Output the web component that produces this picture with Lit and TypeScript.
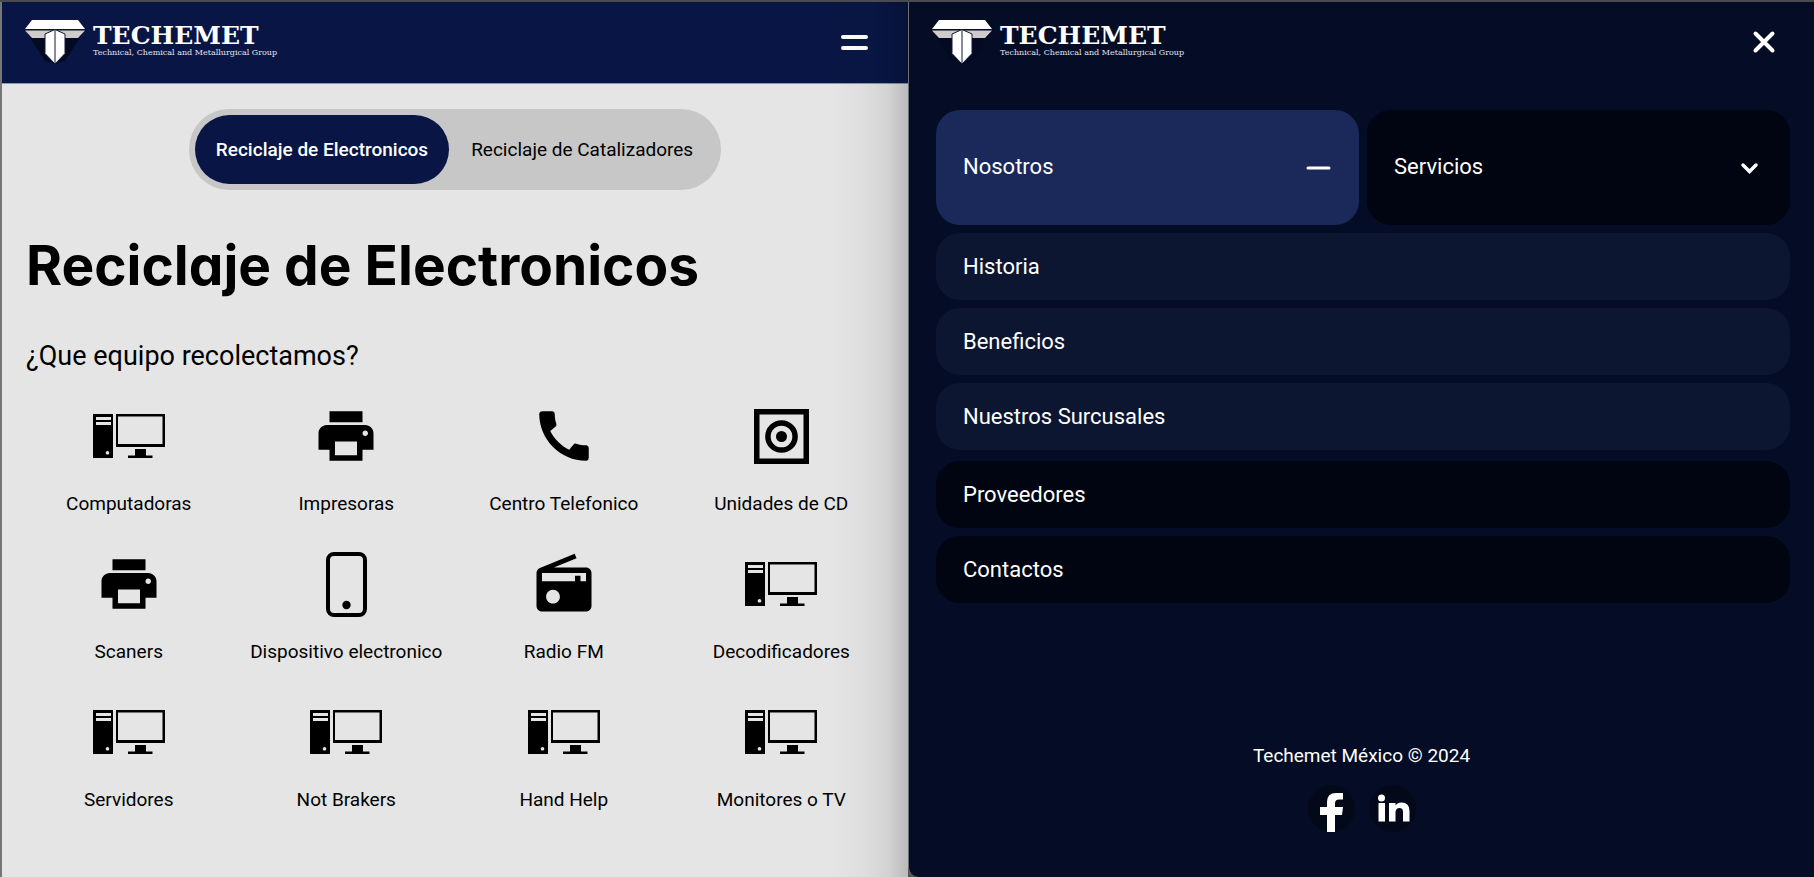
import { LitElement, html, css, svg } from "lit";
import { customElement, property, state } from "lit/decorators.js";

const pc = svg`<path fill-rule="evenodd" d="M0 0h20v44H0zM3 3v3h15V3zM3 8v3h15V8zM14.500 37a1.800 1.800 0 1 0 .01 0z"/><path fill-rule="evenodd" d="M23 0h49v33H23zM25 2.500v27.500h44.500V2.500z"/><path d="M42 35h11v6.500h6.500V44H35v-2.500h7z"/>`;
const icons: Record<string, { w: number; h: number; box: string; art: unknown }> = {
  pc: { w: 72, h: 44, box: "0 0 72 44", art: pc },
  printer: {
    w: 66, h: 66, box: "0 0 24 24",
    art: svg`<path d="M19 8H5c-1.660 0-3 1.340-3 3v6h4v4h12v-4h4v-6c0-1.660-1.340-3-3-3zm-3 11H8v-5h8v5zm3-7c-.550 0-1-.450-1-1s.450-1 1-1 1 .450 1 1-.450 1-1 1zm-1-9H6v4h12V3z"/>`,
  },
  phone: {
    w: 66, h: 66, box: "0 0 24 24",
    art: svg`<path d="M20.010 15.380c-1.230 0-2.420-.200-3.530-.560a.977.977 0 0 0-1.010.240l-1.570 1.970c-2.830-1.350-5.480-3.900-6.890-6.830l1.950-1.660c.270-.280.350-.670.240-1.020-.370-1.110-.560-2.300-.560-3.530 0-.540-.450-.990-.990-.990H4.190C3.650 3 3 3.240 3 3.990 3 13.280 10.730 21 20.010 21c.710 0 .990-.630.990-1.180v-3.450c0-.540-.450-.990-.990-.990z"/>`,
  },
  disc: {
    w: 55, h: 55, box: "0 0 55 55",
    art: svg`<path fill-rule="evenodd" d="M0 0h55v55H0zM5.500 5.500v44h44v-44z"/><circle cx="27.500" cy="27.500" r="13.600" fill="none" stroke="currentColor" stroke-width="5.500"/><circle cx="27.500" cy="27.500" r="5.500"/>`,
  },
  mobile: {
    w: 41, h: 65, box: "0 0 41 65",
    art: svg`<rect x="2" y="2" width="37" height="61" rx="6" fill="none" stroke="currentColor" stroke-width="4"/><circle cx="20.500" cy="53" r="4.200"/>`,
  },
  radio: {
    w: 66, h: 66, box: "0 0 24 24",
    art: svg`<path d="M3.240 6.150C2.510 6.430 2 7.170 2 8v12c0 1.100.890 2 2 2h16c1.110 0 2-.900 2-2V8c0-1.110-.890-2-2-2H8.300l8.260-3.340L15.880 1 3.240 6.150zM8 19.100c-1.400 0-2.500-1.100-2.500-2.500s1.100-2.500 2.500-2.500 2.500 1.100 2.500 2.500-1.100 2.500-2.500 2.500zM20 11H4V8h16z"/><path d="M16 9h2v3h-2z"/>`,
  },
};

@customElement("brand-logo")
export class BrandLogo extends LitElement {
  static styles = css`
    :host { display: block; }
    .brand { display: flex; align-items: center; gap: 8px; color: #fff; text-decoration: none; }
    .mark { display: block; flex: none; }
    .words { display: flex; flex-direction: column; }
    .name { font: 700 25px/22px "DejaVu Serif", serif; }
    .tag { font: 400 8px/12px "DejaVu Serif", serif; color: #e3e6f0; white-space: nowrap; }
  `;
  render() {
    return html`<a class="brand" href="#">
      <svg class="mark" width="60" height="44" viewBox="0 0 60 44" aria-hidden="true">
        <path d="M0 10 20 41 30 44 40 41 60 10z" fill="#030a22" />
        <path d="M7 0h46l7 9H0z" fill="#fff" />
        <path d="M0 10.500h60l-7 7.500H7z" fill="#cfcbcb" />
        <path d="M30 9.500 40 14v19.500L30 44 20 33.500V14z" fill="#fff" stroke="#10183a" />
        <path d="M30 10v33" stroke="#10183a" />
      </svg>
      <span class="words"><span class="name">TECHEMET</span><span class="tag">Technical, Chemical and Metallurgical Group</span></span>
    </a>`;
  }
}

@customElement("catalog-page")
export class CatalogPage extends LitElement {
  @property({ attribute: false }) items: [string, string][] = [
    ["pc", "Computadoras"], ["printer", "Impresoras"], ["phone", "Centro Telefonico"], ["disc", "Unidades de CD"],
    ["printer", "Scaners"], ["mobile", "Dispositivo electronico"], ["radio", "Radio FM"], ["pc", "Decodificadores"],
    ["pc", "Servidores"], ["pc", "Not Brakers"], ["pc", "Hand Help"], ["pc", "Monitores o TV"],
  ];
  @state() tab = 0;
  static styles = css`
    :host { display: flex; flex-direction: column; min-width: 0; position: relative; background: #e5e5e5; color: #000; border-left: 2px solid #777; }
    .shade { position: absolute; inset: 0 0 0 auto; width: 80px; pointer-events: none; background: linear-gradient(90deg, transparent, rgba(0,0,0,.03) 45%, rgba(0,0,0,.08) 75%, rgba(0,0,0,.19)); }
    .bar { box-sizing: border-box; display: flex; justify-content: space-between; align-items: center; height: 82px; padding: 0 38px 1px 23px; background: #091645; border-bottom: 1px solid #8f96b5; }
    button { font: inherit; color: inherit; border: 0; background: none; cursor: pointer; }
    .menu { display: grid; gap: 7px; padding: 2px; }
    .menu span { width: 27px; height: 4px; border-radius: 2px; background: #fff; }
    main { padding: 25px 24px 0; display: flex; flex-direction: column; }
    .tabs { align-self: center; display: flex; padding: 6px; border-radius: 40px; background: #c7c7c7; }
    .tab { height: 69px; padding: 0 21px; border-radius: 35px; font-size: 19px; }
    .tab + .tab { padding: 0 22px; }
    .on { background: #091645; color: #fff; font-weight: 500; }
    h1 { margin: 39px 0 0; font: 700 55px/72px Inter, sans-serif; font-feature-settings: "cv11"; white-space: nowrap; }
    h2 { margin: 37px 0 0; font-size: 27px; line-height: 36px; font-weight: 400; }
    .grid { list-style: none; margin: 23px -6px 0; padding: 0; display: grid; grid-template-columns: repeat(4, 1fr); row-gap: 28px; }
    .item { display: flex; flex-direction: column; align-items: center; gap: 15px; font-size: 19px; line-height: 27px; white-space: nowrap; }
    .pic { height: 78px; display: grid; place-items: center; }
  `;
  render() {
    return html`<header class="bar"><brand-logo></brand-logo><button class="menu" aria-label="Abrir menú"><span></span><span></span></button></header>
      <main>
        <div class="tabs" role="tablist">
          ${["Reciclaje de Electronicos", "Reciclaje de Catalizadores"].map((t, i) => html`<button role="tab" aria-selected=${this.tab === i} class="tab ${this.tab === i ? "on" : ""}" @click=${() => (this.tab = i)}>${t}</button>`)}
        </div>
        <h1>Reciclaje de Electronicos</h1>
        <h2>¿Que equipo recolectamos?</h2>
        <ul class="grid">
          ${this.items.map(([k, label]) => {
            const ic = icons[k];
            return html`<li class="item"><span class="pic"><svg width=${ic.w} height=${ic.h} viewBox=${ic.box} fill="currentColor" aria-hidden="true">${ic.art}</svg></span>${label}</li>`;
          })}
        </ul>
      </main>
      <div class="shade"></div>`;
  }
}

@customElement("menu-panel")
export class MenuPanel extends LitElement {
  @state() open = "Nosotros";
  static styles = css`
    :host { box-sizing: border-box; display: flex; flex-direction: column; min-width: 0; background: #040d25; color: #fff; border-left: 1px solid #6e7078; border-bottom-left-radius: 10px; }
    .bar { box-sizing: border-box; display: flex; justify-content: space-between; align-items: center; height: 82px; padding: 0 38px 2px 23px; }
    button { font: inherit; color: inherit; border: 0; background: none; padding: 0; cursor: pointer; text-align: left; }
    .close { display: grid; }
    nav { display: grid; grid-template-columns: 1fr 1fr; gap: 8px; padding: 26px 24px 0 27px; font-size: 22px; }
    .top { box-sizing: border-box; display: flex; align-items: center; justify-content: space-between; height: 115px; padding: 0 27px 2px; border-radius: 24px; background: #000511; }
    .active { background: #1b285a; }
    .list { grid-column: 1 / -1; display: grid; gap: 8px; }
    .list + .list { margin-top: 3px; }
    .link { box-sizing: border-box; display: flex; align-items: center; height: 67px; padding: 0 27px; border-radius: 24px; background: #000511; color: inherit; text-decoration: none; }
    .sub { background: #0c1631; }
    footer { margin-top: auto; padding-bottom: 45px; display: flex; flex-direction: column; align-items: center; gap: 17px; font-size: 19px; line-height: 24px; }
    .social { display: flex; gap: 14px; }
    .round { width: 47px; height: 47px; border-radius: 50%; background: #030919; display: grid; color: #fff; }
  `;
  private toggle(name: string) { this.open = this.open === name ? "" : name; }
  render() {
    const minus = html`<svg width="26" height="20" viewBox="0 0 26 20" aria-hidden="true"><path d="M2 11h21" stroke="#fff" stroke-width="3" stroke-linecap="round"/></svg>`;
    const chevron = html`<svg width="26" height="20" viewBox="0 0 26 20" aria-hidden="true"><path d="M6 8l6.500 6.500L19 8" fill="none" stroke="#fff" stroke-width="3.500" stroke-linecap="round"/></svg>`;
    return html`<header class="bar"><brand-logo></brand-logo>
        <button class="close" aria-label="Cerrar menú"><svg width="24" height="24" viewBox="0 0 24 24" aria-hidden="true"><path d="M3.500 3.500l17 17M20.500 3.500l-17 17" stroke="#fff" stroke-width="4" stroke-linecap="round"/></svg></button>
      </header>
      <nav>
        ${["Nosotros", "Servicios"].map((n) => html`<button class="top ${this.open === n ? "active" : ""}" aria-expanded=${this.open === n} @click=${() => this.toggle(n)}>${n}${this.open === n ? minus : chevron}</button>`)}
        ${this.open === "Nosotros" ? html`<div class="list">${["Historia", "Beneficios", "Nuestros Surcusales"].map((n) => html`<a class="link sub" href="#">${n}</a>`)}</div>` : ""}
        <div class="list">${["Proveedores", "Contactos"].map((n) => html`<a class="link" href="#">${n}</a>`)}</div>
      </nav>
      <footer>
        <span>Techemet México © 2024</span>
        <div class="social">
          <a class="round" href="#" aria-label="Facebook"><svg width="47" height="47" viewBox="0 0 47 47" fill="currentColor"><path d="M19 47V30h-7v-8h7v-5q0-9 9-9h7v6.500h-4q-4 0-4 4V22h8l-1 8h-7v17z"/></svg></a>
          <a class="round" href="#" aria-label="LinkedIn"><svg width="47" height="47" viewBox="0 0 47 47" fill="currentColor"><circle cx="12.500" cy="13" r="3.500"/><path d="M9.500 18h6.500v18.500H9.500zM20 18h6.500v2.500q2-3 6-3 8 0 8 8.500v10.500H34V27q0-4-3.500-4t-4 4v9.500H20z"/></svg></a>
        </div>
      </footer>`;
  }
}

@customElement("app-root")
export class AppRoot extends LitElement {
  static styles = css`
    :host { box-sizing: border-box; display: grid; grid-template-columns: calc(50% + 1px) 1fr; min-height: 100vh; border-top: 2px solid #4b4b4f; background: #555; font-family: Roboto, sans-serif; }
  `;
  render() {
    return html`<catalog-page></catalog-page><menu-panel></menu-panel>`;
  }
}
